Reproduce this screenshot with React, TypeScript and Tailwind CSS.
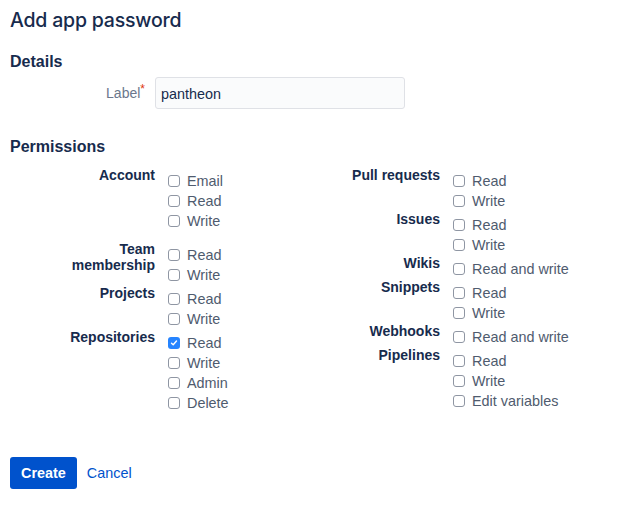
import React from 'react';

type Group = { label: React.ReactNode; options: { text: string; checked?: boolean }[]; className?: string };

const leftGroups: Group[] = [
  { label: 'Account', options: [{ text: 'Email' }, { text: 'Read' }, { text: 'Write' }] },
  { label: <>Team<br />membership</>, options: [{ text: 'Read' }, { text: 'Write' }], className: 'mt-[10px]' },
  { label: 'Projects', options: [{ text: 'Read' }, { text: 'Write' }] },
  {
    label: 'Repositories',
    options: [{ text: 'Read', checked: true }, { text: 'Write' }, { text: 'Admin' }, { text: 'Delete' }],
  },
];

const rightGroups: Group[] = [
  { label: 'Pull requests', options: [{ text: 'Read' }, { text: 'Write' }] },
  { label: 'Issues', options: [{ text: 'Read' }, { text: 'Write' }] },
  { label: 'Wikis', options: [{ text: 'Read and write' }] },
  { label: 'Snippets', options: [{ text: 'Read' }, { text: 'Write' }] },
  { label: 'Webhooks', options: [{ text: 'Read and write' }] },
  { label: 'Pipelines', options: [{ text: 'Read' }, { text: 'Write' }, { text: 'Edit variables' }] },
];

const CheckBox = ({ checked }: { checked?: boolean }) =>
  checked ? (
    <span className="flex h-[12px] w-[12px] items-center justify-center rounded-[3px] bg-[#2684ff]">
      <svg width="8" height="8" viewBox="0 0 8 8" fill="none" stroke="white" strokeWidth="1.4" strokeLinecap="round" strokeLinejoin="round">
        <polyline points="1.5 4.2 3.2 5.8 6.5 2" />
      </svg>
    </span>
  ) : (
    <span className="block h-[12px] w-[12px] rounded-[3px] border border-[#8f96a3] bg-white" />
  );

const PermGroup = ({ group }: { group: Group }) => (
  <div className={`flex ${group.className ?? ''}`}>
    <div className="w-[145px] shrink-0 text-right text-[14px] font-bold leading-[16px] text-[#172b4d]">{group.label}</div>
    <ul className="mt-[4px] pl-[13px]">
      {group.options.map((o, i) => (
        <li key={i} className="flex h-[20px] items-center gap-[7px] text-[14.4px] text-[#4f5b6e]">
          <CheckBox checked={o.checked} />
          <span className="relative top-[1px]">{o.text}</span>
        </li>
      ))}
    </ul>
  </div>
);

export default function App() {
  return (
    <div className="min-h-[507px] bg-white px-[10px] pt-[8px] font-['Liberation_Sans',Arial,sans-serif] text-[#172b4d]">
      <h1 className="h-[24px] font-['Inter',sans-serif] text-[19.5px] font-medium leading-[24px] tracking-[-0.2px]">Add app password</h1>

      <h2 className="mt-[20px] text-[16px] font-bold leading-[20px]">Details</h2>
      <div className="mt-[5px] flex items-center">
        <label className="w-[135px] text-right text-[14px] text-[#6b778c]">
          Label<span className="relative top-[-5px] text-[12px] text-[#de350b]">*</span>
        </label>
        <input
          defaultValue="pantheon"
          className="ml-[10px] h-[32px] w-[250px] rounded-[3px] border border-[#dfe1e6] bg-[#fafbfc] px-[5px] pt-[1px] text-[14.4px] text-[#172b4d] outline-none"
        />
      </div>

      <h2 className="mt-[28px] text-[16px] font-bold leading-[20px]">Permissions</h2>
      <div className="mt-[10px] flex">
        <div className="w-[285px] shrink-0">
          {leftGroups.map((g, i) => (
            <PermGroup key={i} group={g} />
          ))}
        </div>
        <div>
          {rightGroups.map((g, i) => (
            <PermGroup key={i} group={g} />
          ))}
        </div>
      </div>

      <div className="mt-[44px] flex items-center gap-[10px]">
        <button className="h-[32px] rounded-[3px] bg-[#0052cc] px-[11px] pt-[1px] text-[14.4px] font-bold text-white">Create</button>
        <a href="#" className="relative top-[1px] text-[14.4px] text-[#0052cc]">Cancel</a>
      </div>
    </div>
  );
}
